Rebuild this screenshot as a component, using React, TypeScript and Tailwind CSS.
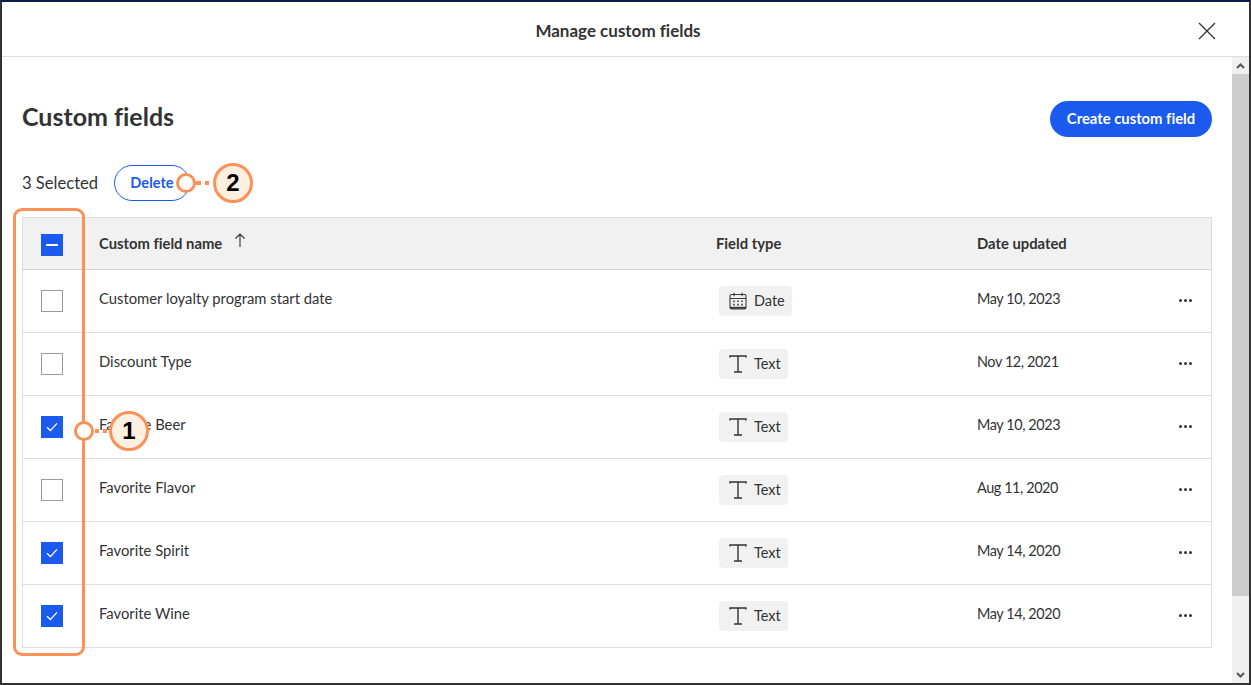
const rows = [
  { name: "Customer loyalty program start date", type: "Date", date: "May 10, 2023", checked: false },
  { name: "Discount Type", type: "Text", date: "Nov 12, 2021", checked: false },
  { name: "Favorite Beer", type: "Text", date: "May 10, 2023", checked: true },
  { name: "Favorite Flavor", type: "Text", date: "Aug 11, 2020", checked: false },
  { name: "Favorite Spirit", type: "Text", date: "May 14, 2020", checked: true },
  { name: "Favorite Wine", type: "Text", date: "May 14, 2020", checked: true },
];

function CalendarIcon() {
  return (
    <svg width="18" height="18" viewBox="0 0 18 18" fill="none" stroke="#3a3a3a" strokeWidth="1.1">
      <rect x="1" y="2.5" width="16" height="14.5" rx="1.5" />
      <path d="M1 6.5h16M5 .8v3.4M13 .8v3.4" />
      <path d="M1 15.8h16" strokeWidth="2" />
      <path d="M4.2 9.3h1.6M8.2 9.3h1.6M12.2 9.3h1.6M4.2 12.6h1.6M8.2 12.6h1.6M12.2 12.6h1.6" strokeWidth="1.6" />
    </svg>
  );
}

function TextIcon() {
  return (
    <svg width="18" height="18" viewBox="0 0 18 18" fill="none" stroke="#333333" strokeWidth="1.4">
      <path d="M1 2.5V1h16v1.5M9 1v16M5 17h8" />
    </svg>
  );
}

function Checkbox({ state }: { state: "on" | "off" | "mixed" }) {
  if (state === "off") {
    return <div className="h-[22px] w-[22px] border border-[#9a9a9a] bg-white" />;
  }
  return (
    <div className="flex h-[22px] w-[22px] items-center justify-center bg-[#1a5aef]">
      {state === "on" ? (
        <svg width="12" height="10" viewBox="0 0 12 10" fill="none" stroke="white" strokeWidth="1.4">
          <path d="M1 5.2 4.4 8.6 11 1.4" />
        </svg>
      ) : (
        <div className="h-[2px] w-[12px] bg-white" />
      )}
    </div>
  );
}

function Marker({ label, lineClass, className }: { label: string; lineClass: string; className: string }) {
  return (
    <div className={`absolute flex items-center ${className}`}>
      <div className="z-10 h-[20px] w-[20px] rounded-full border-[3px] border-[#fc9158] bg-white" />
      <div className={`h-[4px] bg-[repeating-linear-gradient(90deg,#fc9158_0_4px,transparent_4px_8px)] bg-[position:1px_0] ${lineClass}`} />
      <div className="z-10 flex h-[40px] w-[40px] items-center justify-center rounded-full border-[3px] border-[#fc9158] bg-[#fdf0e1] font-['Liberation_Sans',sans-serif] text-[24px] font-bold text-black">
        {label}
      </div>
    </div>
  );
}

export default function App() {
  return (
    <div className="relative flex h-[685px] w-[1251px] flex-col overflow-hidden border-2 border-[#333333] border-t-[#0b1c4d] bg-white font-['Lato',sans-serif] text-[#333333] [font-variant-ligatures:none]">
      <header className="relative flex h-[55px] shrink-0 items-center justify-center border-b border-[#dddddd] pr-[15px] pt-[3px]">
        <h1 className="text-[17px] font-bold">Manage custom fields</h1>
        <svg className="absolute right-[33px] top-[20px]" width="18" height="18" viewBox="0 0 18 18" fill="none" stroke="#333333" strokeWidth="1.3">
          <path d="M1 1l16 16M17 1 1 17" />
        </svg>
      </header>

      <div className="flex min-h-0 flex-1">
        <main className="min-w-0 flex-1 pl-5 pr-5 pt-[44px]">
          <div className="flex h-[36px] items-center justify-between">
            <h2 className="-mt-[4px] text-[25px] font-bold">Custom fields</h2>
            <button className="h-[36px] w-[162px] rounded-full bg-[#1a5aef] pb-[2px] text-[14.8px] font-bold text-white">
              Create custom field
            </button>
          </div>

          <div className="mt-[28px] flex h-[36px] items-center">
            <span className="w-[92px] text-[16.6px]">3 Selected</span>
            <button className="h-[36px] w-[76px] rounded-full border border-[#1a5aef] text-[14.6px] font-bold text-[#1a5aef]">
              Delete
            </button>
          </div>

          <div className="mt-[16px] border border-[#dddddd]">
            <div className="grid h-[52px] grid-cols-[76px_617px_261px_1fr] items-center border-b border-[#d4d4d4] bg-[#f1f1f1] text-[14.8px] font-bold">
              <div className="pl-[18px] pt-[3px]">
                <Checkbox state="mixed" />
              </div>
              <div className="flex items-center gap-[12px]">
                Custom field name
                <svg className="mb-2" width="12" height="14" viewBox="0 0 12 14" fill="none" stroke="#333333" strokeWidth="1.1">
                  <path d="M6 14V1M1.5 5.5 6 1l4.5 4.5" />
                </svg>
              </div>
              <div>Field type</div>
              <div>Date updated</div>
            </div>

            {rows.map((row) => (
              <div
                key={row.name}
                className="grid h-[63px] grid-cols-[76px_617px_261px_1fr] items-center border-b border-[#dddddd] text-[14.8px] last:h-[62px] last:border-b-0"
              >
                <div className="pl-[18px]">
                  <Checkbox state={row.checked ? "on" : "off"} />
                </div>
                <div className="-mt-[5px]">{row.name}</div>
                <div>
                  <span className="ml-[3px] inline-flex h-[30px] items-center gap-[7px] rounded-[4px] bg-[#f1f1f1] pl-[10px] pr-[7px] text-[14.5px]">
                    {row.type === "Date" ? <CalendarIcon /> : <TextIcon />}
                    {row.type}
                  </span>
                </div>
                <div className="flex items-center justify-between pr-[19px]">
                  <span className="-mt-[5px] text-[14.4px] tracking-[-0.4px]">{row.date}</span>
                  <span className="flex gap-[2px]">
                    <i className="h-[3px] w-[3px] rounded-full bg-[#333333]" />
                    <i className="h-[3px] w-[3px] rounded-full bg-[#333333]" />
                    <i className="h-[3px] w-[3px] rounded-full bg-[#333333]" />
                  </span>
                </div>
              </div>
            ))}
          </div>
        </main>

        <div className="flex w-[17px] shrink-0 flex-col bg-[#f0f0f0]">
          <div className="flex h-[17px] items-center justify-center">
            <svg width="9" height="6" viewBox="0 0 9 6" fill="none" stroke="#555555" strokeWidth="2">
              <path d="M1 5l3.5-3.5L8 5" />
            </svg>
          </div>
          <div className="h-[522px] bg-[#cdcdcd]" />
          <div className="mt-auto flex h-[17px] items-center justify-center">
            <svg width="9" height="6" viewBox="0 0 9 6" fill="none" stroke="#555555" strokeWidth="2">
              <path d="M1 1l3.5 3.5L8 1" />
            </svg>
          </div>
        </div>
      </div>

      <div className="absolute left-[11px] top-[206px] h-[448px] w-[72px] rounded-[9px] border-[3px] border-[#fc9158]" />
      <Marker label="1" lineClass="w-[15px]" className="left-[72px] top-[409px]" />
      <Marker label="2" lineClass="w-[17px]" className="left-[174px] top-[161px]" />
    </div>
  );
}
